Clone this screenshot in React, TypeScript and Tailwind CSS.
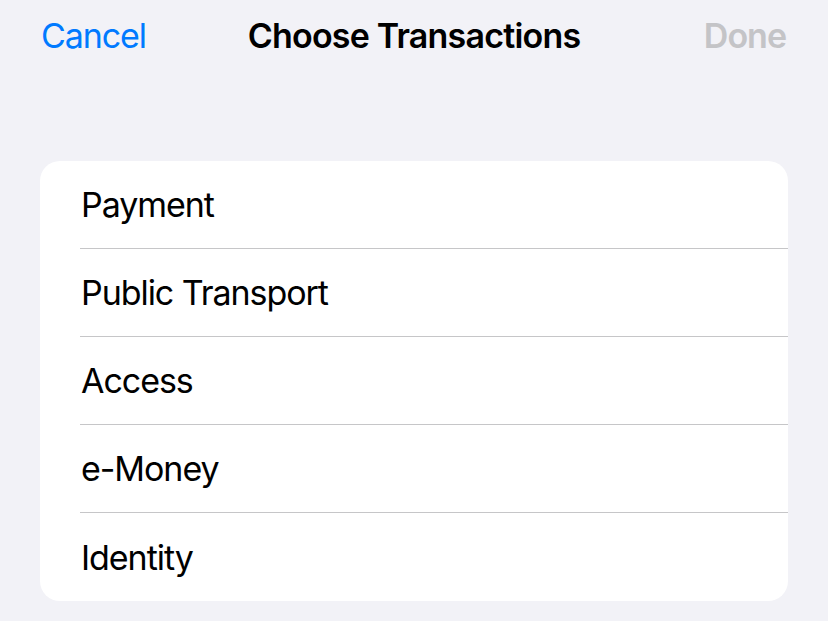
export default function App() {
  const items = ["Payment", "Public Transport", "Access", "e-Money", "Identity"];
  return (
    <div
      className="w-[828px] h-[621px] bg-[#f2f2f7] overflow-hidden"
      style={{ fontFamily: "Inter, 'Noto Sans', sans-serif" }}
    >
      <div className="relative h-[70px] flex items-center justify-between pl-[41px] pr-[42px]">
        <span className="text-[34px] text-[#007aff] tracking-[-1.1px]">Cancel</span>
        <span className="absolute left-0 right-0 text-center text-[34px] font-semibold text-black tracking-[-0.8px] pointer-events-none">
          Choose Transactions
        </span>
        <span className="text-[34px] font-semibold text-[#c4c4c7] tracking-[-1px]">Done</span>
      </div>
      <div className="mt-[91px] mx-[40px] bg-white rounded-[20px] overflow-hidden">
        {items.map((item, i) => (
          <div key={item} className="pl-[40px]">
            <div
              className={
                "h-[88px] flex items-center text-[34px] text-black tracking-[-1.05px] " +
                (i < items.length - 1 ? "border-b border-[#c6c6c8]" : "")
              }
            >
              <span className="pl-[1px]">{item}</span>
            </div>
          </div>
        ))}
      </div>
    </div>
  );
}
